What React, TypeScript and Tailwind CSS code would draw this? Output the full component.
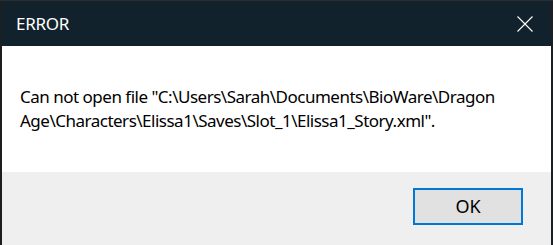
export default function App() {
  return (
    <div className="w-[553px] h-[245px] bg-[#1b1f22] overflow-hidden flex flex-col" style={{ fontFamily: '"Noto Sans", "Segoe UI", sans-serif' }}>
      <div className="h-[1px] shrink-0 bg-[#2a2d30]" />
      <div className="ml-[2px] w-[549px] flex-1 flex flex-col">
        <div className="h-[45px] shrink-0 bg-[#12222c] flex items-center justify-between pl-[14px] pr-[18px]">
          <span className="text-white text-[17px] tracking-[-0.3px] leading-none">ERROR</span>
          <svg width="16" height="16" viewBox="0 0 16 16" className="text-white">
            <path d="M0.5 0.5 L15.5 15.5 M15.5 0.5 L0.5 15.5" stroke="currentColor" strokeWidth="1.1" fill="none" />
          </svg>
        </div>
        <div className="h-[126px] shrink-0 bg-white pl-[18px] pt-[39px] text-[17px] tracking-[-0.5px] leading-[24px] text-black">
          <div className="whitespace-nowrap">Can not open file "C:\Users\Sarah\Documents\BioWare\Dragon</div>
          <div className="whitespace-nowrap">Age\Characters\Elissa1\Saves\Slot_1\Elissa1_Story.xml".</div>
        </div>
        <div className="flex-1 bg-[#efefef] flex justify-end items-start pt-[16px] pr-[28px]">
          <button className="w-[110px] h-[37px] border-2 border-[#0078d7] bg-[#e1e1e1] text-[18px] text-black flex items-center justify-center">OK</button>
        </div>
      </div>
    </div>
  );
}
